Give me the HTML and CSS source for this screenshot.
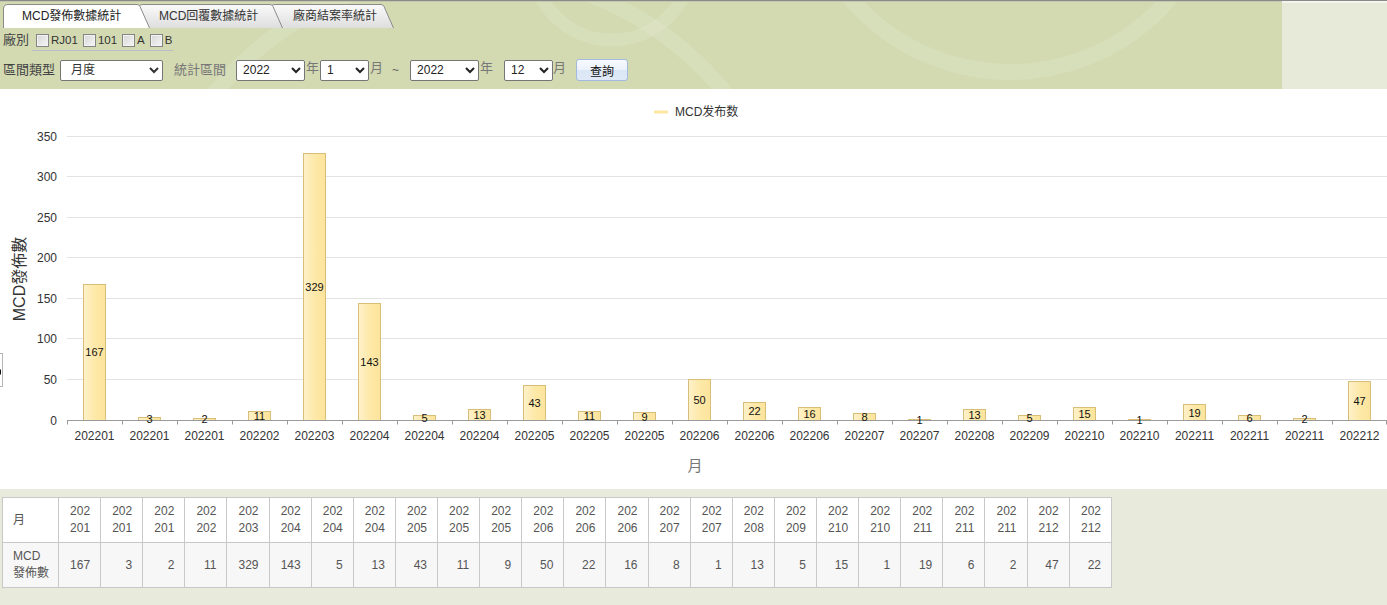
FILE: index.html
```html
<!DOCTYPE html>
<html lang="zh-Hant">
<head>
<meta charset="utf-8">
<title>MCD發佈數據統計</title>
<link rel="stylesheet" href="styles.css">
</head>
<body>
<header class="header">
  <div class="header-main">
    <svg class="header-deco" width="1282" height="87" viewBox="0 0 1282 87" aria-hidden="true">
      <circle cx="612" cy="-42" r="80" stroke-width="13"/>
      <circle cx="1010" cy="-140" r="210" stroke-width="16"/>
      <circle cx="470" cy="300" r="330" stroke-width="16"/>
    </svg>
    <nav class="tabs">
      <div class="tab tab-1">
        <svg class="tab-shape" width="147" height="24" viewBox="0 0 147 24" aria-hidden="true">
          <path class="tab-fill-active" d="M0.5,24 V5 Q0.5,0.5 5,0.5 H134 Q136,0.5 137,2.5 L146.5,24"/>
        </svg>
        <span class="tab-label">MCD發佈數據統計</span>
      </div>
      <div class="tab tab-2">
        <svg class="tab-shape" width="145" height="24" viewBox="0 0 145 24" aria-hidden="true">
          <defs><linearGradient id="tg2" x1="0" y1="0" x2="0" y2="1"><stop offset="0" stop-color="#fafafa"/><stop offset="1" stop-color="#dedede"/></linearGradient></defs>
          <path fill="url(#tg2)" d="M0.5,24 V5 Q0.5,0.5 5,0.5 H132 Q134,0.5 135,2.5 L144.5,24"/>
        </svg>
        <span class="tab-label">MCD回覆數據統計</span>
      </div>
      <div class="tab tab-3">
        <svg class="tab-shape" width="124" height="24" viewBox="0 0 124 24" aria-hidden="true">
          <defs><linearGradient id="tg3" x1="0" y1="0" x2="0" y2="1"><stop offset="0" stop-color="#fafafa"/><stop offset="1" stop-color="#dedede"/></linearGradient></defs>
          <path fill="url(#tg3)" d="M0.5,24 V5 Q0.5,0.5 5,0.5 H111 Q113,0.5 114,2.5 L123.5,24"/>
        </svg>
        <span class="tab-label">廠商結案率統計</span>
      </div>
    </nav>
    <div class="filter-row filter-row-1">
      <span class="lbl lbl-strong">廠別</span>
      <div class="check-group">
        <label class="check"><input type="checkbox"><span>RJ01</span></label>
        <label class="check"><input type="checkbox"><span>101</span></label>
        <label class="check"><input type="checkbox"><span>A</span></label>
        <label class="check"><input type="checkbox"><span>B</span></label>
      </div>
    </div>
    <div class="filter-row filter-row-2">
      <span class="lbl lbl-strong">區間類型</span>
      <select class="sel sel-type"><option>月度</option></select>
      <span class="lbl lbl-muted lbl-range">統計區間</span>
      <select class="sel sel-start-year"><option>2022</option></select>
      <span class="unit unit-tight">年</span>
      <select class="sel sel-start-month"><option>1</option></select>
      <span class="unit unit-tight">月</span>
      <span class="tilde">~</span>
      <select class="sel sel-end-year"><option>2022</option></select>
      <span class="unit unit-tight">年</span>
      <select class="sel sel-end-month"><option>12</option></select>
      <span class="unit">月</span>
      <button class="btn-query" type="button">查詢</button>
    </div>
  </div>
  <div class="header-side"></div>
</header>

<main class="chart">
  <div class="edge-widget"><span class="edge-mark"></span></div>
  <svg class="chart-svg" width="1387" height="400" viewBox="0 89 1387 400">
    <defs>
      <linearGradient id="barFill" x1="0" y1="0" x2="1" y2="0">
        <stop offset="0" stop-color="#fff1ca"/>
        <stop offset="0.55" stop-color="#fde8a6"/>
        <stop offset="1" stop-color="#fde49c"/>
      </linearGradient>
    </defs>

    <g class="legend">
      <line x1="654" y1="112" x2="668" y2="112" class="legend-swatch"/>
      <text x="675" y="116" class="legend-text">MCD发布数</text>
    </g>

    <g class="grid">
      <line x1="67" y1="379.5" x2="1387" y2="379.5"/>
      <line x1="67" y1="338.5" x2="1387" y2="338.5"/>
      <line x1="67" y1="298.5" x2="1387" y2="298.5"/>
      <line x1="67" y1="257.5" x2="1387" y2="257.5"/>
      <line x1="67" y1="217.5" x2="1387" y2="217.5"/>
      <line x1="67" y1="176.5" x2="1387" y2="176.5"/>
      <line x1="67" y1="136.5" x2="1387" y2="136.5"/>
    </g>

    <g class="ylab">
      <text x="57" y="424.5">0</text>
      <text x="57" y="383.5">50</text>
      <text x="57" y="342.5">100</text>
      <text x="57" y="302.5">150</text>
      <text x="57" y="261.5">200</text>
      <text x="57" y="221.5">250</text>
      <text x="57" y="180.5">300</text>
      <text x="57" y="140.5">350</text>
    </g>

    <text class="ytitle" transform="translate(25,279) rotate(-90)">MCD發佈數</text>

    <g class="bars">
      <rect x="83.5" y="284.5" width="22" height="136"/>
      <rect x="138.5" y="417.5" width="22" height="3"/>
      <rect x="193.5" y="418.5" width="22" height="2"/>
      <rect x="248.5" y="411.5" width="22" height="9"/>
      <rect x="303.5" y="153.5" width="22" height="267"/>
      <rect x="358.5" y="303.5" width="22" height="117"/>
      <rect x="413.5" y="415.5" width="22" height="5"/>
      <rect x="468.5" y="409.5" width="22" height="11"/>
      <rect x="523.5" y="385.5" width="22" height="35"/>
      <rect x="578.5" y="411.5" width="22" height="9"/>
      <rect x="633.5" y="412.5" width="22" height="8"/>
      <rect x="688.5" y="379.5" width="22" height="41"/>
      <rect x="743.5" y="402.5" width="22" height="18"/>
      <rect x="798.5" y="407.5" width="22" height="13"/>
      <rect x="853.5" y="413.5" width="22" height="7"/>
      <rect x="908.5" y="419.5" width="22" height="1"/>
      <rect x="963.5" y="409.5" width="22" height="11"/>
      <rect x="1018.5" y="415.5" width="22" height="5"/>
      <rect x="1073.5" y="407.5" width="22" height="13"/>
      <rect x="1128.5" y="419.5" width="22" height="1"/>
      <rect x="1183.5" y="404.5" width="22" height="16"/>
      <rect x="1238.5" y="415.5" width="22" height="5"/>
      <rect x="1293.5" y="418.5" width="22" height="2"/>
      <rect x="1348.5" y="381.5" width="22" height="39"/>
    </g>

    <line class="axis" x1="67" y1="420.5" x2="1387" y2="420.5"/>
    <path class="ticks" d="M67.5 420.5V424.5M122.5 420.5V424.5M177.5 420.5V424.5M232.5 420.5V424.5M287.5 420.5V424.5M342.5 420.5V424.5M397.5 420.5V424.5M452.5 420.5V424.5M507.5 420.5V424.5M562.5 420.5V424.5M617.5 420.5V424.5M672.5 420.5V424.5M727.5 420.5V424.5M782.5 420.5V424.5M837.5 420.5V424.5M892.5 420.5V424.5M947.5 420.5V424.5M1002.5 420.5V424.5M1057.5 420.5V424.5M1112.5 420.5V424.5M1167.5 420.5V424.5M1222.5 420.5V424.5M1277.5 420.5V424.5M1332.5 420.5V424.5M1386.5 420.5V424.5"/>

    <g class="barlab">
      <text x="94.5" y="356">167</text>
      <text x="149.5" y="423">3</text>
      <text x="204.5" y="423">2</text>
      <text x="259.5" y="419.5">11</text>
      <text x="314.5" y="290.5">329</text>
      <text x="369.5" y="366">143</text>
      <text x="424.5" y="422">5</text>
      <text x="479.5" y="418.5">13</text>
      <text x="534.5" y="406.5">43</text>
      <text x="589.5" y="419.5">11</text>
      <text x="644.5" y="420.5">9</text>
      <text x="699.5" y="403.5">50</text>
      <text x="754.5" y="415">22</text>
      <text x="809.5" y="417.5">16</text>
      <text x="864.5" y="421">8</text>
      <text x="919.5" y="423.5">1</text>
      <text x="974.5" y="418.5">13</text>
      <text x="1029.5" y="422">5</text>
      <text x="1084.5" y="418">15</text>
      <text x="1139.5" y="423.5">1</text>
      <text x="1194.5" y="416.5">19</text>
      <text x="1249.5" y="421.5">6</text>
      <text x="1304.5" y="423">2</text>
      <text x="1359.5" y="405">47</text>
    </g>

    <g class="xlab">
      <text x="94.5" y="440">202201</text>
      <text x="149.5" y="440">202201</text>
      <text x="204.5" y="440">202201</text>
      <text x="259.5" y="440">202202</text>
      <text x="314.5" y="440">202203</text>
      <text x="369.5" y="440">202204</text>
      <text x="424.5" y="440">202204</text>
      <text x="479.5" y="440">202204</text>
      <text x="534.5" y="440">202205</text>
      <text x="589.5" y="440">202205</text>
      <text x="644.5" y="440">202205</text>
      <text x="699.5" y="440">202206</text>
      <text x="754.5" y="440">202206</text>
      <text x="809.5" y="440">202206</text>
      <text x="864.5" y="440">202207</text>
      <text x="919.5" y="440">202207</text>
      <text x="974.5" y="440">202208</text>
      <text x="1029.5" y="440">202209</text>
      <text x="1084.5" y="440">202210</text>
      <text x="1139.5" y="440">202210</text>
      <text x="1194.5" y="440">202211</text>
      <text x="1249.5" y="440">202211</text>
      <text x="1304.5" y="440">202211</text>
      <text x="1359.5" y="440">202212</text>
    </g>

    <text class="xtitle" x="695" y="471">月</text>
  </svg>
</main>

<section class="data-area">
  <table class="data-table">
    <colgroup><col class="col-head"></colgroup>
    <tr class="row-months">
      <th class="row-head">月</th>
      <th>202201</th><th>202201</th><th>202201</th><th>202202</th><th>202203</th>
      <th>202204</th><th>202204</th><th>202204</th><th>202205</th><th>202205</th>
      <th>202205</th><th>202206</th><th>202206</th><th>202206</th><th>202207</th>
      <th>202207</th><th>202208</th><th>202209</th><th>202210</th><th>202210</th>
      <th>202211</th><th>202211</th><th>202211</th><th>202212</th><th>202212</th>
    </tr>
    <tr class="row-values">
      <td class="row-head">MCD<br>發佈數</td>
      <td>167</td><td>3</td><td>2</td><td>11</td><td>329</td>
      <td>143</td><td>5</td><td>13</td><td>43</td><td>11</td>
      <td>9</td><td>50</td><td>22</td><td>16</td><td>8</td>
      <td>1</td><td>13</td><td>5</td><td>15</td><td>1</td>
      <td>19</td><td>6</td><td>2</td><td>47</td><td>22</td>
    </tr>
  </table>
</section>
</body>
</html>
```

FILE: styles.css
```css
* { box-sizing: border-box; }

html, body { margin: 0; padding: 0; }

body {
  width: 1387px;
  height: 605px;
  overflow: hidden;
  background: #e8eadb;
  font-family: "Liberation Sans", Arial, "Noto Sans CJK TC", sans-serif;
  font-size: 12px;
  color: #333;
}

/* ---------- header ---------- */
.header {
  display: flex;
  height: 89px;
  border-top: 1px solid #8a8a8a;
}

.header-main {
  flex: 1;
  position: relative;
  overflow: hidden;
  background: #d3dab2;
  border-top: 1px solid #c4c9ad;
}

.header-side {
  width: 105px;
  background: #e7e9d9;
  border-top: 2px solid #f3f4ee;
}

.header-deco {
  position: absolute;
  left: 0;
  top: 0;
}

.header-deco circle {
  fill: none;
  stroke: rgba(255, 255, 255, 0.11);
}

.tabs {
  position: relative;
  display: flex;
  height: 26px;
  padding: 2px 0 0 3px;
}

.tab {
  position: relative;
  display: flex;
  align-items: center;
  height: 24px;
  font-size: 12px;
  color: #222;
  white-space: nowrap;
}

.tab-shape {
  position: absolute;
  left: 0;
  top: 0;
}

.tab-shape path {
  stroke: #8a8a8a;
  stroke-width: 1;
}

.tab-fill-active { fill: #ffffff; }

.tab-label {
  position: relative;
  line-height: 16px;
}

.tab-1 { width: 147px; padding-left: 19px; z-index: 3; }
.tab-2 { width: 145px; margin-left: -12px; padding-left: 21px; z-index: 2; color: #333; }
.tab-3 { width: 124px; margin-left: -13px; padding-left: 23px; z-index: 1; color: #333; }

.filter-row {
  position: relative;
  display: flex;
  align-items: center;
  padding-left: 3px;
}

.filter-row-1 {
  margin-top: 3px;
  height: 18px;
}

.filter-row-2 {
  margin-top: 10px;
  height: 22px;
}

.lbl {
  font-size: 13px;
  line-height: 18px;
  white-space: nowrap;
}

.lbl-strong { color: #444; }
.lbl-muted { color: #777; }
.lbl-range { margin-left: 11px; }

.check-group {
  display: flex;
  align-items: center;
  align-self: flex-start;
  margin-left: 3px;
  padding: 0 1px 1px 0;
  height: 20px;
  border-bottom: 1px solid #b9bccb;
}

.check {
  display: flex;
  align-items: center;
  gap: 2px;
  margin-left: 5px;
  font-size: 11.5px;
  color: #333;
}

.check:first-child { margin-left: 4px; }

.check input {
  -webkit-appearance: none;
  appearance: none;
  margin: 0;
  width: 13px;
  height: 13px;
  border: 1px solid #858585;
  background: linear-gradient(135deg, #d6d6d6, #f6f6f6);
  box-shadow: inset 0 0 0 1px #f2f2f2;
}

.sel {
  height: 21px;
  font-family: "Liberation Sans", Arial, "Noto Sans CJK TC", sans-serif;
  font-size: 12px;
  color: #222;
  background: #fff;
  border: 1px solid #767676;
  border-radius: 2px;
  padding: 0 0 0 2px;
  margin: 0;
}

.sel-type { width: 103px; margin-left: 5px; padding-left: 6px; color: #333; }
.sel-start-year { width: 69px; margin-left: 10px; }
.sel-start-month { width: 49px; margin-left: 1px; }
.sel-end-year { width: 69px; margin-left: 11px; }
.sel-end-month { width: 49px; margin-left: 11px; }

.unit {
  font-size: 13px;
  line-height: 18px;
  color: #777;
  align-self: flex-start;
}

.unit-tight { margin-left: 1px; }

.tilde {
  margin-left: 9px;
  font-size: 12px;
  color: #666;
}

.btn-query {
  width: 52px;
  height: 22px;
  margin: 0 0 0 10px;
  padding: 0;
  font-family: "Liberation Sans", Arial, "Noto Sans CJK TC", sans-serif;
  font-size: 12px;
  color: #111;
  border: 1px solid #a2badf;
  border-radius: 3px;
  background: linear-gradient(#f7faff 0%, #ecf2fb 48%, #dce7f6 52%, #dfe9f7 100%);
}

/* ---------- chart ---------- */
.chart {
  position: relative;
  height: 400px;
  background: #fff;
}

.chart-svg {
  display: block;
}

.edge-widget {
  position: absolute;
  left: -14px;
  top: 264px;
  width: 17px;
  height: 34px;
  border: 1px solid #b5b5b5;
  background: #fff;
}

.edge-mark {
  position: absolute;
  right: 1px;
  top: 15px;
  width: 0;
  height: 0;
  border-top: 3px solid transparent;
  border-bottom: 3px solid transparent;
  border-right: 3px solid #111;
}

.legend-swatch {
  stroke: #fde6a2;
  stroke-width: 3;
}

.legend-text {
  font-family: "Liberation Sans", Arial, "Noto Sans CJK SC", sans-serif;
  font-size: 12px;
  fill: #333;
}

.grid line {
  stroke: #e3e3e3;
  stroke-width: 1;
}

.ylab text {
  font-size: 12px;
  fill: #333;
  text-anchor: end;
}

.ytitle {
  font-family: "Liberation Sans", Arial, "Noto Sans CJK TC", sans-serif;
  font-size: 16px;
  fill: #333;
  text-anchor: middle;
}

.bars rect {
  fill: url(#barFill);
  stroke: #d8be78;
  stroke-width: 1;
}

.axis {
  stroke: #9a9a9a;
  stroke-width: 1;
}

.ticks {
  stroke: #9a9a9a;
  stroke-width: 1;
  fill: none;
}

.barlab text {
  font-size: 11px;
  fill: #111;
  text-anchor: middle;
}

.xlab text {
  font-size: 12px;
  fill: #333;
  text-anchor: middle;
}

.xtitle {
  font-family: "Noto Sans CJK TC", sans-serif;
  font-size: 15px;
  fill: #777;
  text-anchor: middle;
}

/* ---------- data table ---------- */
.data-area {
  height: 116px;
  padding: 8px 0 0 2px;
  background: #e8eadb;
}

.data-table {
  border-collapse: collapse;
  table-layout: fixed;
  width: 1110px;
  background: #fff;
  color: #555;
  font-size: 12px;
}

.col-head { width: 56px; }

.data-table th,
.data-table td {
  border: 1px solid #c8c8c8;
  padding: 5px 10px 5px 8px;
  line-height: 17px;
  text-align: right;
  font-weight: normal;
  word-break: break-all;
  vertical-align: middle;
}

.data-table .row-head {
  text-align: left;
  padding-left: 10px;
  padding-right: 4px;
  word-break: normal;
}

.row-values td { background: #f7f7f7; }
```
